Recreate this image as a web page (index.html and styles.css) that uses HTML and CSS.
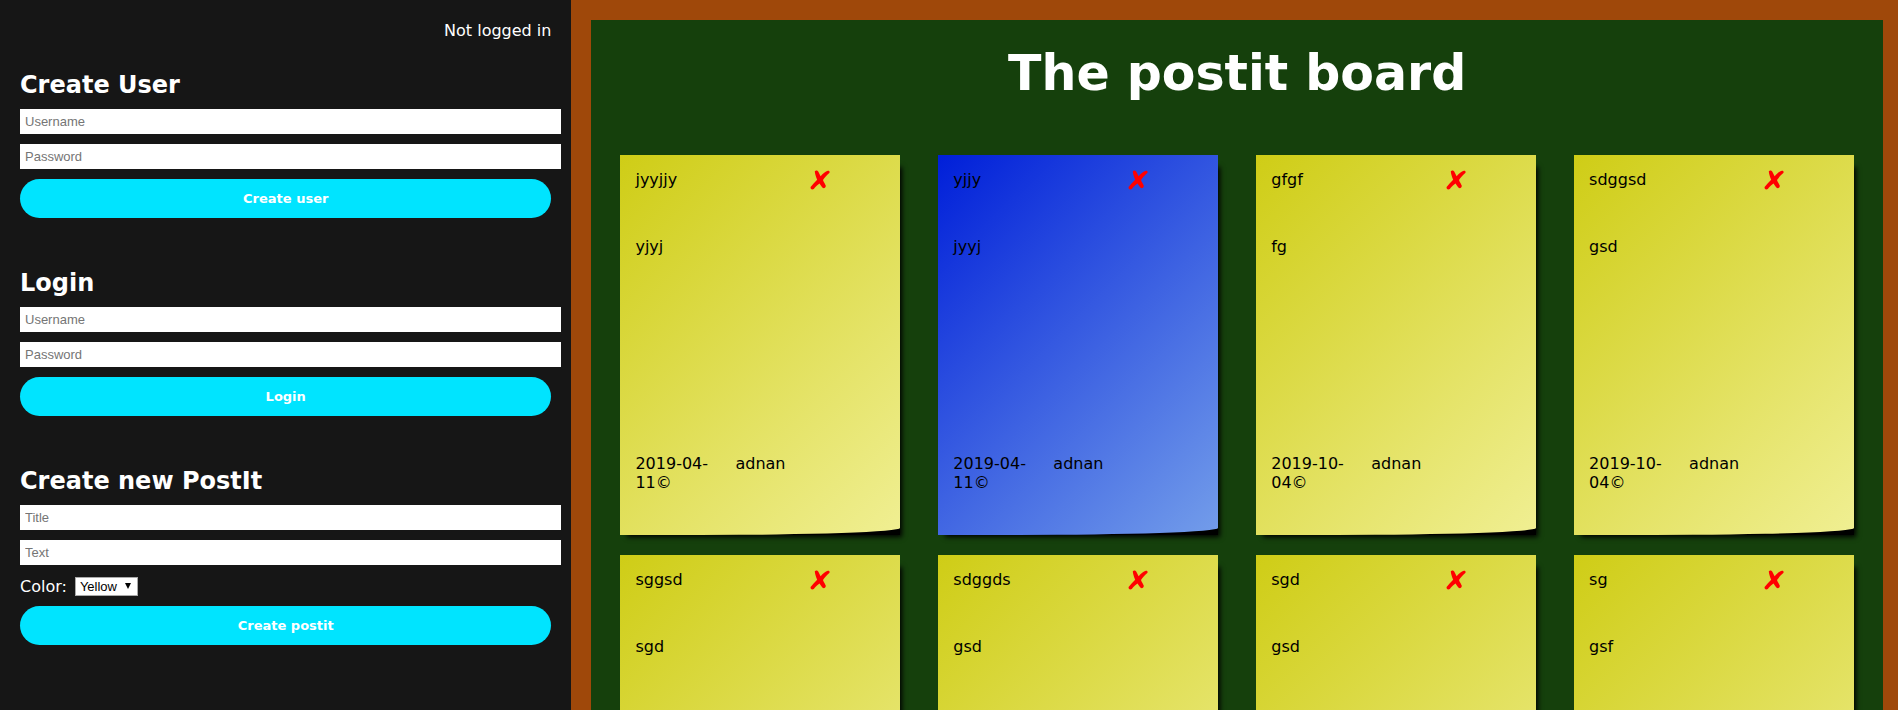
FILE: index.html
```
<!DOCTYPE html>
<html lang="en">
<head>
<meta charset="utf-8">
<title>The postit board</title>
<link rel="stylesheet" href="styles.css">
</head>
<body>
<div class="layout">
  <aside class="sidebar">
    <p class="status">Not logged in</p>
    <form class="panel">
      <h2>Create User</h2>
      <input class="field" type="text" placeholder="Username" aria-label="Username">
      <input class="field" type="password" placeholder="Password" aria-label="Password">
      <button class="submit" type="button">Create user</button>
    </form>
    <form class="panel">
      <h2>Login</h2>
      <input class="field" type="text" placeholder="Username" aria-label="Username">
      <input class="field" type="password" placeholder="Password" aria-label="Password">
      <button class="submit" type="button">Login</button>
    </form>
    <form class="panel">
      <h2>Create new PostIt</h2>
      <input class="field" type="text" placeholder="Title" aria-label="Title">
      <input class="field" type="text" placeholder="Text" aria-label="Text">
      <div class="color-row">
        <label for="color">Color:</label>
        <span class="select-wrap">
          <select id="color" class="color"><option>Yellow</option><option>Blue</option></select>
          <svg class="arrow" viewBox="0 0 6 6" aria-hidden="true"><path d="M0 0H6L3 6Z"/></svg>
        </span>
      </div>
      <button class="submit" type="button">Create postit</button>
    </form>
  </aside>
  <main class="frame">
    <div class="board">
      <h1>The postit board</h1>
      <div class="notes" id="notes"></div>
    </div>
  </main>
</div>
<script src="notes.js"></script>
</body>
</html>
```
FILE: notes.js
```
const notes = [
  { title: "jyyjjy", text: "yjyj", color: "yellow", date: "2019-04-11", author: "adnan" },
  { title: "yjjy", text: "jyyj", color: "blue", date: "2019-04-11", author: "adnan" },
  { title: "gfgf", text: "fg", color: "yellow", date: "2019-10-04", author: "adnan" },
  { title: "sdggsd", text: "gsd", color: "yellow", date: "2019-10-04", author: "adnan" },
  { title: "sggsd", text: "sgd", color: "yellow" },
  { title: "sdggds", text: "gsd", color: "yellow" },
  { title: "sgd", text: "gsd", color: "yellow" },
  { title: "sg", text: "gsf", color: "yellow" }
];
const cross = '<svg viewBox="0 0 20 20" aria-hidden="true"><path d="M4.800 1.200C6 -.2 8 .5 8.600 2.200L10.600 6.200C13 3.500 15.500 1.500 17.800 .8C19.200 .5 20.200 1.800 19.300 3C17 4.800 14.800 7.500 13 10C13.800 12.500 15.200 13.800 15.800 15.800C15.800 17.800 14 18.800 12.600 17.800C11.400 16.800 10.600 15.200 9.600 13.600C7.800 14.800 5.600 16.800 3.800 19C2 20.200 .2 19 .6 17C2.600 14.600 5 12.200 7.200 9.800C6 7 5 4 4.800 1.200Z"/></svg>';
const footer = (n) => n.date
  ? `<span class="date">${n.date}©</span><span class="author">${n.author}</span>`
  : "";
document.getElementById("notes").innerHTML = notes.map((n) => `
  <article class="note">
    <div class="paper ${n.color}">
      <span class="title">${n.title}</span>
      <button class="delete" type="button" aria-label="Delete ${n.title}">${cross}</button>
      <p class="text">${n.text}</p>
      ${footer(n)}
    </div>
  </article>`).join("");
```
FILE: styles.css
```
body {
  margin: 0;
  font: 16px/19px Verdana, "DejaVu Sans", sans-serif;
  color: #000;
}
.layout {
  display: flex;
  height: 100vh;
  overflow: hidden;
}
.sidebar {
  flex: 0 0 28%;
  padding: 20px;
  background: #161616;
  color: #fff;
}
.status {
  margin: 0 0 29px;
  line-height: 21px;
  text-align: right;
}
.panel {
  margin: 0 0 50px;
}
.panel h2 {
  margin: 0 0 8px;
  font-size: 24px;
  line-height: 31px;
}
.field {
  display: block;
  box-sizing: border-box;
  width: calc(100% + 10px);
  height: 25px;
  margin: 0 0 10px;
  padding: 0 5px;
  border: 0;
  background: #fff;
  font: 13px "Liberation Sans", Arial, sans-serif;
}
.field::placeholder {
  color: #757575;
}
.submit {
  display: block;
  width: 100%;
  height: 39px;
  padding: 0;
  border: 0;
  border-radius: 20px;
  background: #00e4ff;
  color: #fff;
  font: 900 13px Verdana, "DejaVu Sans", sans-serif;
}
.color-row {
  display: flex;
  align-items: center;
  gap: 8px;
  height: 23px;
  margin: 0 0 8px;
}
.select-wrap {
  position: relative;
  display: flex;
}
.color {
  appearance: none;
  width: 63px;
  height: 19px;
  padding: 0 4px;
  border: 1px solid #a9a9a9;
  border-radius: 0;
  background: #fff;
  color: #000;
  font: 13px "Liberation Sans", Arial, sans-serif;
}
.arrow {
  position: absolute;
  top: 6px;
  right: 7px;
  width: 6px;
  height: 6px;
  pointer-events: none;
}
.frame {
  flex: 1;
  min-width: 0;
  padding: 20px 15px 20px 20px;
  background: #9f480a;
}
.board {
  padding: 25px 29px;
  background: #15400c;
}
.board h1 {
  margin: 0 0 52px;
  color: #fff;
  font-size: 49px;
  line-height: 58px;
  text-align: center;
}
.notes {
  display: grid;
  grid-template-columns: repeat(4, minmax(0, 1fr));
  grid-auto-rows: 380px;
  gap: 20px 38px;
}
.note {
  position: relative;
  z-index: 0;
}
.note::before {
  content: "";
  position: absolute;
  z-index: -1;
  inset: 10px 0 0 5px;
  box-shadow: 2px 2px 5px #000;
  background: #000;
}
.paper {
  box-sizing: border-box;
  height: 100%;
  padding: 15px;
  display: grid;
  grid-template-columns: 80px 55px 20px;
  grid-template-rows: 67px 217px auto;
  column-gap: 20px;
  border-bottom-right-radius: 200px 7px;
}
.yellow {
  background: linear-gradient(135deg, #cfcd16, #f0ef93);
}
.blue {
  background: linear-gradient(135deg, #001fd9, #739dea);
}
.title {
  grid-column: 1 / 3;
}
.delete {
  width: 20px;
  height: 20px;
  padding: 0;
  border: 0;
  background: none;
}
.delete svg {
  display: block;
  width: 20px;
  height: 20px;
  fill: #f00;
}
.text {
  grid-column: 1 / 4;
  margin: 0;
}
```
